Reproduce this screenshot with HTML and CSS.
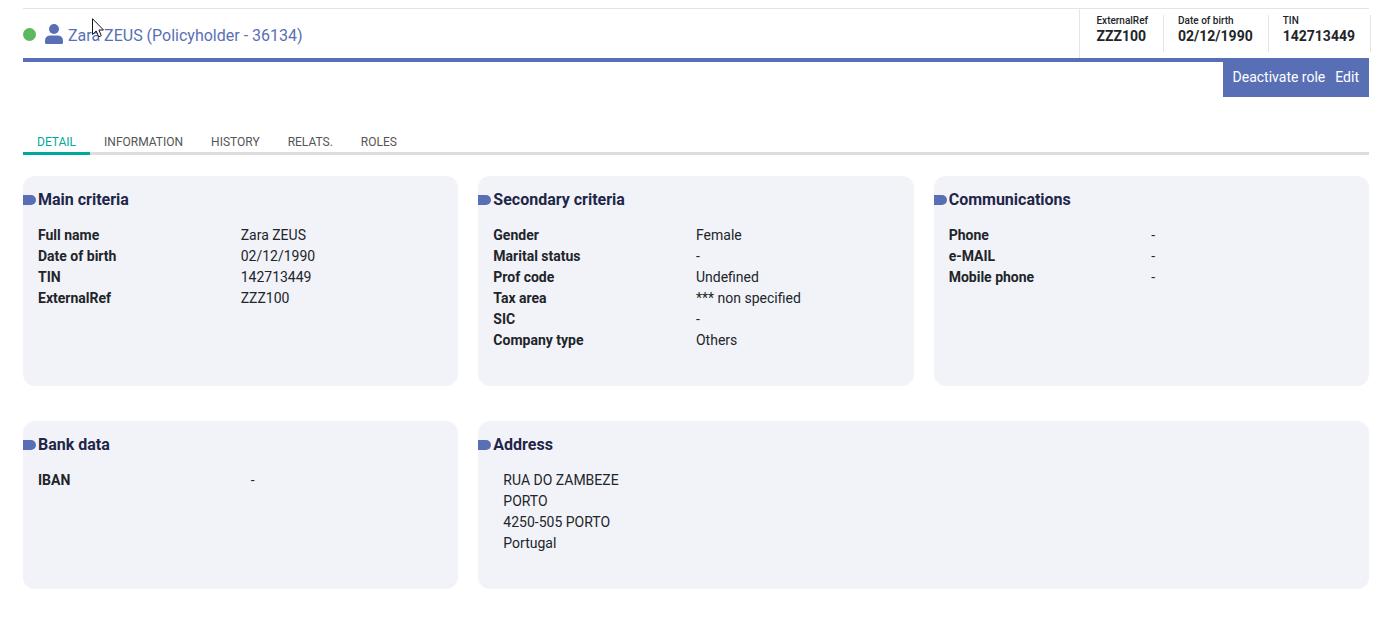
FILE: index.html
```html
<!DOCTYPE html>
<html lang="en">
<head>
<meta charset="utf-8">
<title>Zara ZEUS</title>
<link rel="stylesheet" href="styles.css">
</head>
<body>
<header class="entity">
  <div class="entity-name">
    <span class="status"></span>
    <svg class="person" viewBox="0 0 18 20" aria-hidden="true"><circle cx="9" cy="5" r="5"/><path d="M5.500 11.500H12.500Q18 11.500 18 17V18.500Q18 20 16.500 20H1.500Q0 20 0 18.500V17Q0 11.500 5.500 11.500Z"/></svg>
    <h1 class="entity-title">Zara ZEUS (Policyholder - 36134)</h1>
  </div>
  <dl class="facts">
    <div class="fact"><dt>ExternalRef</dt><dd>ZZZ100</dd></div>
    <div class="fact"><dt>Date of birth</dt><dd>02/12/1990</dd></div>
    <div class="fact"><dt>TIN</dt><dd>142713449</dd></div>
  </dl>
  <svg class="pointer" viewBox="0 0 12 20" aria-hidden="true"><path d="M.5.7V16.500L4.200 13 6.700 18.800 9.300 17.700 6.900 12H11.500Z"/></svg>
</header>
<div class="actions">
  <button type="button" class="action">Deactivate role</button>
  <button type="button" class="action">Edit</button>
</div>
<nav class="tabs">
  <a class="tab tab-active" href="#detail">DETAIL</a>
  <a class="tab" href="#information">INFORMATION</a>
  <a class="tab" href="#history">HISTORY</a>
  <a class="tab" href="#relats">RELATS.</a>
  <a class="tab" href="#roles">ROLES</a>
</nav>
<main class="cards" id="detail">
  <section class="card card-tall">
    <h2 class="card-title">Main criteria</h2>
    <dl class="rows">
      <dt>Full name</dt><dd>Zara ZEUS</dd>
      <dt>Date of birth</dt><dd>02/12/1990</dd>
      <dt>TIN</dt><dd>142713449</dd>
      <dt>ExternalRef</dt><dd>ZZZ100</dd>
    </dl>
  </section>
  <section class="card card-tall">
    <h2 class="card-title">Secondary criteria</h2>
    <dl class="rows">
      <dt>Gender</dt><dd>Female</dd>
      <dt>Marital status</dt><dd>-</dd>
      <dt>Prof code</dt><dd>Undefined</dd>
      <dt>Tax area</dt><dd>*** non specified</dd>
      <dt>SIC</dt><dd>-</dd>
      <dt>Company type</dt><dd>Others</dd>
    </dl>
  </section>
  <section class="card card-tall">
    <h2 class="card-title">Communications</h2>
    <dl class="rows">
      <dt>Phone</dt><dd>-</dd>
      <dt>e-MAIL</dt><dd>-</dd>
      <dt>Mobile phone</dt><dd>-</dd>
    </dl>
  </section>
  <section class="card">
    <h2 class="card-title">Bank data</h2>
    <dl class="rows rows-bank">
      <dt>IBAN</dt><dd>-</dd>
    </dl>
  </section>
  <section class="card card-wide">
    <h2 class="card-title">Address</h2>
    <address class="address">RUA DO ZAMBEZE<br>PORTO<br>4250-505 PORTO<br>Portugal</address>
  </section>
</main>
</body>
</html>
```

FILE: styles.css
```css
* {
  box-sizing: border-box;
}

body {
  margin: 0;
  padding: 8px 14px 28px 23px;
  background: #fff;
  color: #212529;
  font: 14px/21px Roboto, sans-serif;
}

h1, h2, dl, dd {
  margin: 0;
}

.entity {
  position: relative;
  display: flex;
  justify-content: space-between;
  min-height: 54px;
  border-top: 1px solid #e1e4ea;
  border-bottom: 4px solid #596fb5;
}

.entity-name {
  display: flex;
  align-items: center;
  padding-top: 2px;
}

.status {
  width: 13px;
  height: 13px;
  border-radius: 50%;
  background: #5cb85c;
}

.person {
  width: 18px;
  height: 20px;
  margin: 0 5px 2px 9px;
  fill: #596fb5;
}

.entity-title {
  padding-top: 2px;
  color: #596fb5;
  font-size: 16px;
  font-weight: 400;
  line-height: 24px;
}

.facts {
  display: flex;
  margin-right: -2px;
  padding: 6px 0 6px 2px;
  border-left: 1px solid #e1e4ea;
}

.fact {
  padding: 0 15px 0 14px;
  border-right: 1px solid #e1e4ea;
}

.fact dt {
  font-size: 10px;
  font-weight: 500;
  line-height: 12px;
}

.fact dd {
  font-weight: 700;
  line-height: 18px;
}

.pointer {
  position: absolute;
  top: 9px;
  left: 69px;
  width: 12px;
  height: 20px;
  fill: #fff;
  stroke: #15151f;
}

.actions {
  display: flex;
  gap: 10px;
  width: fit-content;
  margin-left: auto;
  padding: 5px 10px 9px;
  background: #596fb5;
}

.action {
  padding: 0;
  border: 0;
  background: none;
  color: #fff;
  font: inherit;
}

.tabs {
  display: flex;
  margin-top: 36px;
  border-bottom: 3px solid #ddd;
}

.tab {
  margin-bottom: -3px;
  padding: 0 14px;
  border-bottom: 3px solid transparent;
  color: #555;
  font-size: 12px;
  line-height: 19px;
  text-decoration: none;
}

.tab-active {
  border-color: #00a99d;
  color: #00a99d;
}

.cards {
  display: grid;
  grid-template-columns: repeat(3, 1fr);
  gap: 35px 20px;
  margin-top: 21px;
}

.card {
  min-height: 168px;
  padding: 13px 0 34px;
  border-radius: 12px;
  background: #f2f3f9;
}

.card-tall {
  min-height: 210px;
}

.card-wide {
  grid-column: span 2;
}

.card-title {
  display: flex;
  align-items: center;
  gap: 2px;
  color: #1f2648;
  font-size: 16px;
  font-weight: 700;
  line-height: 22px;
}

.card-title::before {
  content: "";
  width: 13px;
  height: 10px;
  border-radius: 0 5px 5px 0;
  background: #596fb5;
}

.rows {
  display: grid;
  grid-template-columns: 1fr 1fr;
  padding: 14px 15px 0;
}

.rows dt {
  font-weight: 700;
}

.rows-bank dd {
  padding-left: 10px;
}

.address {
  padding: 14px 25px 0;
  font-style: normal;
}
```
